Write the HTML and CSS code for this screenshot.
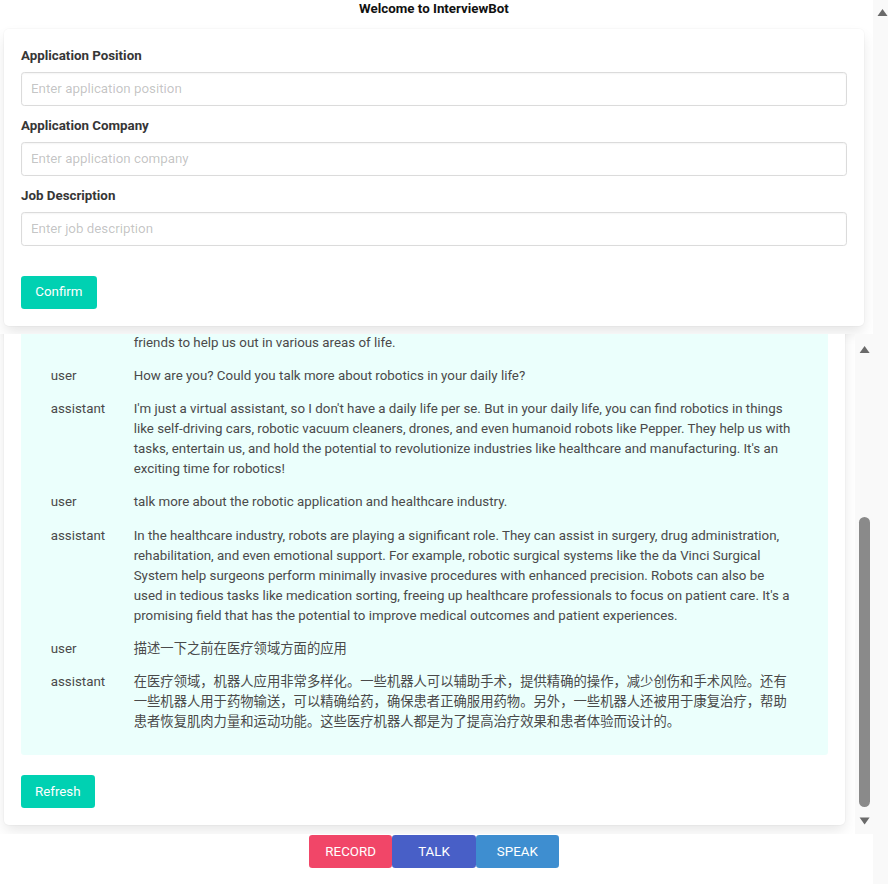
FILE: index.html
```html
<!DOCTYPE html>
<html lang="en">
<head>
<meta charset="utf-8">
<title>InterviewBot</title>
<link rel="stylesheet" href="styles.css">
</head>
<body>
<div class="app">
  <h1 class="title">Welcome to InterviewBot</h1>

  <div class="box form-box">
    <div class="field">
      <label class="label">Application Position</label>
      <input class="input" type="text" placeholder="Enter application position">
    </div>
    <div class="field">
      <label class="label">Application Company</label>
      <input class="input" type="text" placeholder="Enter application company">
    </div>
    <div class="field">
      <label class="label">Job Description</label>
      <input class="input" type="text" placeholder="Enter job description">
    </div>
    <div class="actions">
      <button class="btn btn-primary">Confirm</button>
    </div>
  </div>

  <div class="chat-area">
    <div class="chat-scroll">
      <div class="box chat-box">
        <div class="messages">
          <div class="msg"><div class="role">user</div><div class="text">Hi, nice to meet you!</div></div>
          <div class="msg"><div class="role">assistant</div><div class="text">Hello! Nice to meet you too. I'm InterviewBot, your virtual interview assistant. Feel free to ask me anything, or fill in the form above to start a mock interview.</div></div>
          <div class="msg"><div class="role">user</div><div class="text">What do you know about robots?</div></div>
          <div class="msg"><div class="role">assistant</div><div class="text">Robots are programmable machines that can carry out a series of actions automatically. They combine mechanical engineering, electronics and computer science, and with the help of sensors and artificial intelligence they can perceive their environment, make decisions and perform tasks. Today robots are used in factories, warehouses, hospitals, homes and even in space exploration. As technology keeps improving, robots are becoming smarter and safer, and they can act as assistants, tools and even<br>friends to help us out in various areas of life.</div></div>
          <div class="msg"><div class="role">user</div><div class="text">How are you? Could you talk more about robotics in your daily life?</div></div>
          <div class="msg"><div class="role">assistant</div><div class="text">I'm just a virtual assistant, so I don't have a daily life per se. But in your daily life, you can find robotics in things like self-driving cars, robotic vacuum cleaners, drones, and even humanoid robots like Pepper. They help us with tasks, entertain us, and hold the potential to revolutionize industries like healthcare and manufacturing. It's an exciting time for robotics!</div></div>
          <div class="msg"><div class="role">user</div><div class="text">talk more about the robotic application and healthcare industry.</div></div>
          <div class="msg"><div class="role">assistant</div><div class="text">In the healthcare industry, robots are playing a significant role. They can assist in surgery, drug administration, rehabilitation, and even emotional support. For example, robotic surgical systems like the da Vinci Surgical System help surgeons perform minimally invasive procedures with enhanced precision. Robots can also be used in tedious tasks like medication sorting, freeing up healthcare professionals to focus on patient care. It's a promising field that has the potential to improve medical outcomes and patient experiences.</div></div>
          <div class="msg"><div class="role">user</div><div class="text">描述一下之前在医疗领域方面的应用</div></div>
          <div class="msg"><div class="role">assistant</div><div class="text">在医疗领域，机器人应用非常多样化。一些机器人可以辅助手术，提供精确的操作，减少创伤和手术风险。还有一些机器人用于药物输送，可以精确给药，确保患者正确服用药物。另外，一些机器人还被用于康复治疗，帮助患者恢复肌肉力量和运动功能。这些医疗机器人都是为了提高治疗效果和患者体验而设计的。</div></div>
        </div>
        <button class="btn btn-primary refresh">Refresh</button>
      </div>
    </div>
    <div class="vscroll" aria-hidden="true">
      <svg class="arrow" width="18" height="20" viewBox="0 0 18 20"><path d="M4.6 19L14.6 19L9.6 12Z" fill="#6a6a6a"/></svg>
      <div class="track"><div class="thumb"></div></div>
      <svg class="arrow" width="18" height="24" viewBox="0 0 18 24"><path d="M4.6 7.5L14.6 7.5L9.6 14.5Z" fill="#6a6a6a"/></svg>
    </div>
  </div>

  <div class="controls">
    <button class="btn ctl btn-record">RECORD</button>
    <button class="btn ctl btn-talk">TALK</button>
    <button class="btn ctl btn-speak">SPEAK</button>
  </div>
</div>
<div class="page-scroll" aria-hidden="true">
  <svg class="arrow" width="15" height="20" viewBox="0 0 15 20"><path d="M4.5 16L14.5 16L9.5 9Z" fill="#6a6a6a"/></svg>
</div>
</body>
</html>
```

FILE: styles.css
```css
html,
body {
  height: 100%;
}

body {
  margin: 0;
  display: flex;
  font-family: Roboto, "Noto Sans CJK SC", sans-serif;
  font-size: 13.333px;
  line-height: 1.5;
  color: #4a4a4a;
  background: #fff;
  overflow: hidden;
}

.app {
  flex: 1 1 auto;
  min-width: 0;
}

.page-scroll {
  flex: 0 0 15px;
  width: 15px;
  height: 100%;
  background: #f9f9f9;
}

.arrow {
  display: block;
  flex-shrink: 0;
}

.title {
  margin: 0 5px 12px 0;
  font-size: 13.333px;
  line-height: 17px;
  font-weight: 700;
  color: #111;
  text-align: center;
}

.box {
  background: #fff;
  border-radius: 5px;
  box-shadow: 0 6.67px 13.33px -1.67px rgba(10, 10, 10, 0.1), 0 0 0 1px rgba(10, 10, 10, 0.02);
  padding: 16.67px;
}

.form-box {
  margin: 0 9px 8.33px 4px;
  padding: 16.67px 17px;
}

.field {
  margin-bottom: 10px;
}

.label {
  display: block;
  font-weight: 700;
  color: #363636;
  margin-bottom: 6.67px;
}

.input {
  display: block;
  box-sizing: border-box;
  width: 100%;
  height: 33.33px;
  margin: 0;
  padding: 0 9px;
  border: 1px solid #dbdbdb;
  border-radius: 3.33px;
  box-shadow: inset 0 0.0625em 0.125em rgba(10, 10, 10, 0.05);
  font: inherit;
  color: #363636;
  background: #fff;
  outline: none;
}

.input::placeholder {
  color: rgba(54, 54, 54, 0.3);
}

.actions {
  padding-top: 20px;
  display: flex;
}

.btn {
  display: inline-flex;
  align-items: center;
  justify-content: center;
  box-sizing: border-box;
  height: 33.33px;
  margin: 0;
  padding: 0 13.33px;
  border: 1px solid transparent;
  border-radius: 3.33px;
  font: inherit;
  line-height: 1.5;
  color: #fff;
  cursor: pointer;
}

.btn-primary {
  background: #00d1b2;
}

.chat-area {
  display: flex;
  height: 500px;
}

.chat-scroll {
  flex: 1;
  min-width: 0;
  overflow: hidden;
  display: flex;
  flex-direction: column-reverse;
}

.vscroll {
  flex: 0 0 18px;
  display: flex;
  flex-direction: column;
  background: #f9f9f9;
}

.track {
  flex: 1;
  display: flex;
  flex-direction: column;
  justify-content: flex-end;
  padding: 0 3px 3px 4px;
}

.thumb {
  height: 290px;
  background: #8a8a8a;
  border-radius: 5.5px;
}

.chat-box {
  flex-shrink: 0;
  margin: 9px 10px 9px 4px;
}

.messages {
  background: #ebfffc;
  border-radius: 3.33px;
  padding: 18px 20px 16px;
}

.msg {
  display: flex;
  padding: 6.67px 0;
}

.role {
  flex-shrink: 0;
  width: 63px;
  padding: 0 10px;
}

.text {
  flex: 1;
  min-width: 0;
  padding: 0 14px 0 10px;
}

.refresh {
  margin-top: 20px;
}

.controls {
  display: flex;
  justify-content: center;
  margin: 1px 5px 0 0;
}

.ctl {
  width: 83.33px;
  padding: 0;
}

.btn-record {
  background: #f14668;
}

.btn-talk {
  background: #485fc7;
}

.btn-speak {
  background: #3e8ed0;
}
```
